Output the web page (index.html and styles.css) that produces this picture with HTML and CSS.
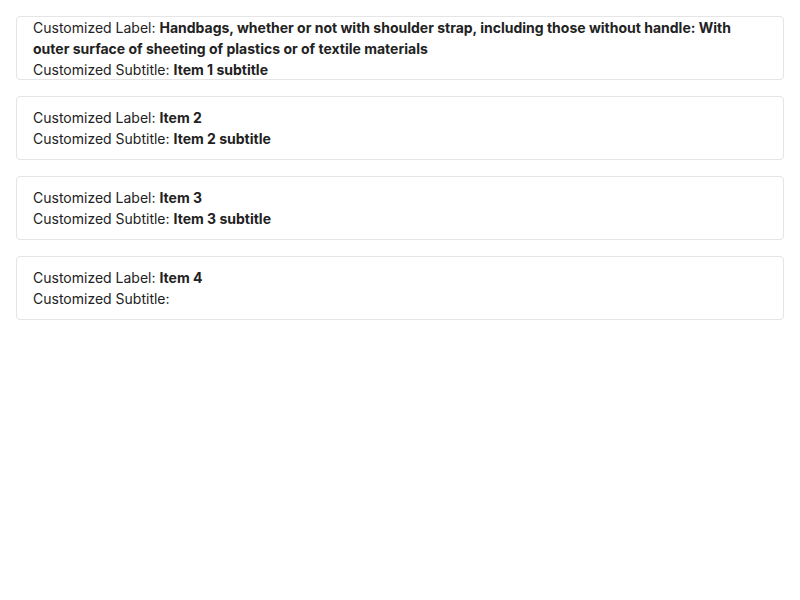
FILE: index.html
```html
<!DOCTYPE html>
<html>
<head>
<meta charset="utf-8">
<link rel="stylesheet" href="styles.css">
</head>
<body>
<div class="list">
  <div class="card">
    <div class="line">Customized Label: <b>Handbags, whether or not with shoulder strap, including those without handle: With outer surface of sheeting of plastics or of textile materials</b></div>
    <div class="line">Customized Subtitle: <b>Item 1 subtitle</b></div>
  </div>
  <div class="card">
    <div class="line">Customized Label: <b>Item 2</b></div>
    <div class="line">Customized Subtitle: <b>Item 2 subtitle</b></div>
  </div>
  <div class="card">
    <div class="line">Customized Label: <b>Item 3</b></div>
    <div class="line">Customized Subtitle: <b>Item 3 subtitle</b></div>
  </div>
  <div class="card">
    <div class="line">Customized Label: <b>Item 4</b></div>
    <div class="line">Customized Subtitle: <b></b></div>
  </div>
</div>
</body>
</html>
```
FILE: styles.css
```css
html, body {
  margin: 0;
  padding: 0;
  background: #fff;
}
body {
  font-family: Inter, "Liberation Sans", sans-serif;
  font-size: 14px;
  line-height: 21px;
  color: #222;
}
.list {
  display: flex;
  flex-direction: column;
  gap: 16px;
  padding: 16px;
}
.card {
  box-sizing: border-box;
  height: 64px;
  border: 1px solid #e5e5e5;
  border-radius: 4px;
  padding: 0 16px;
  display: flex;
  flex-direction: column;
  justify-content: center;
}
.card b {
  font-weight: 700;
}
```
